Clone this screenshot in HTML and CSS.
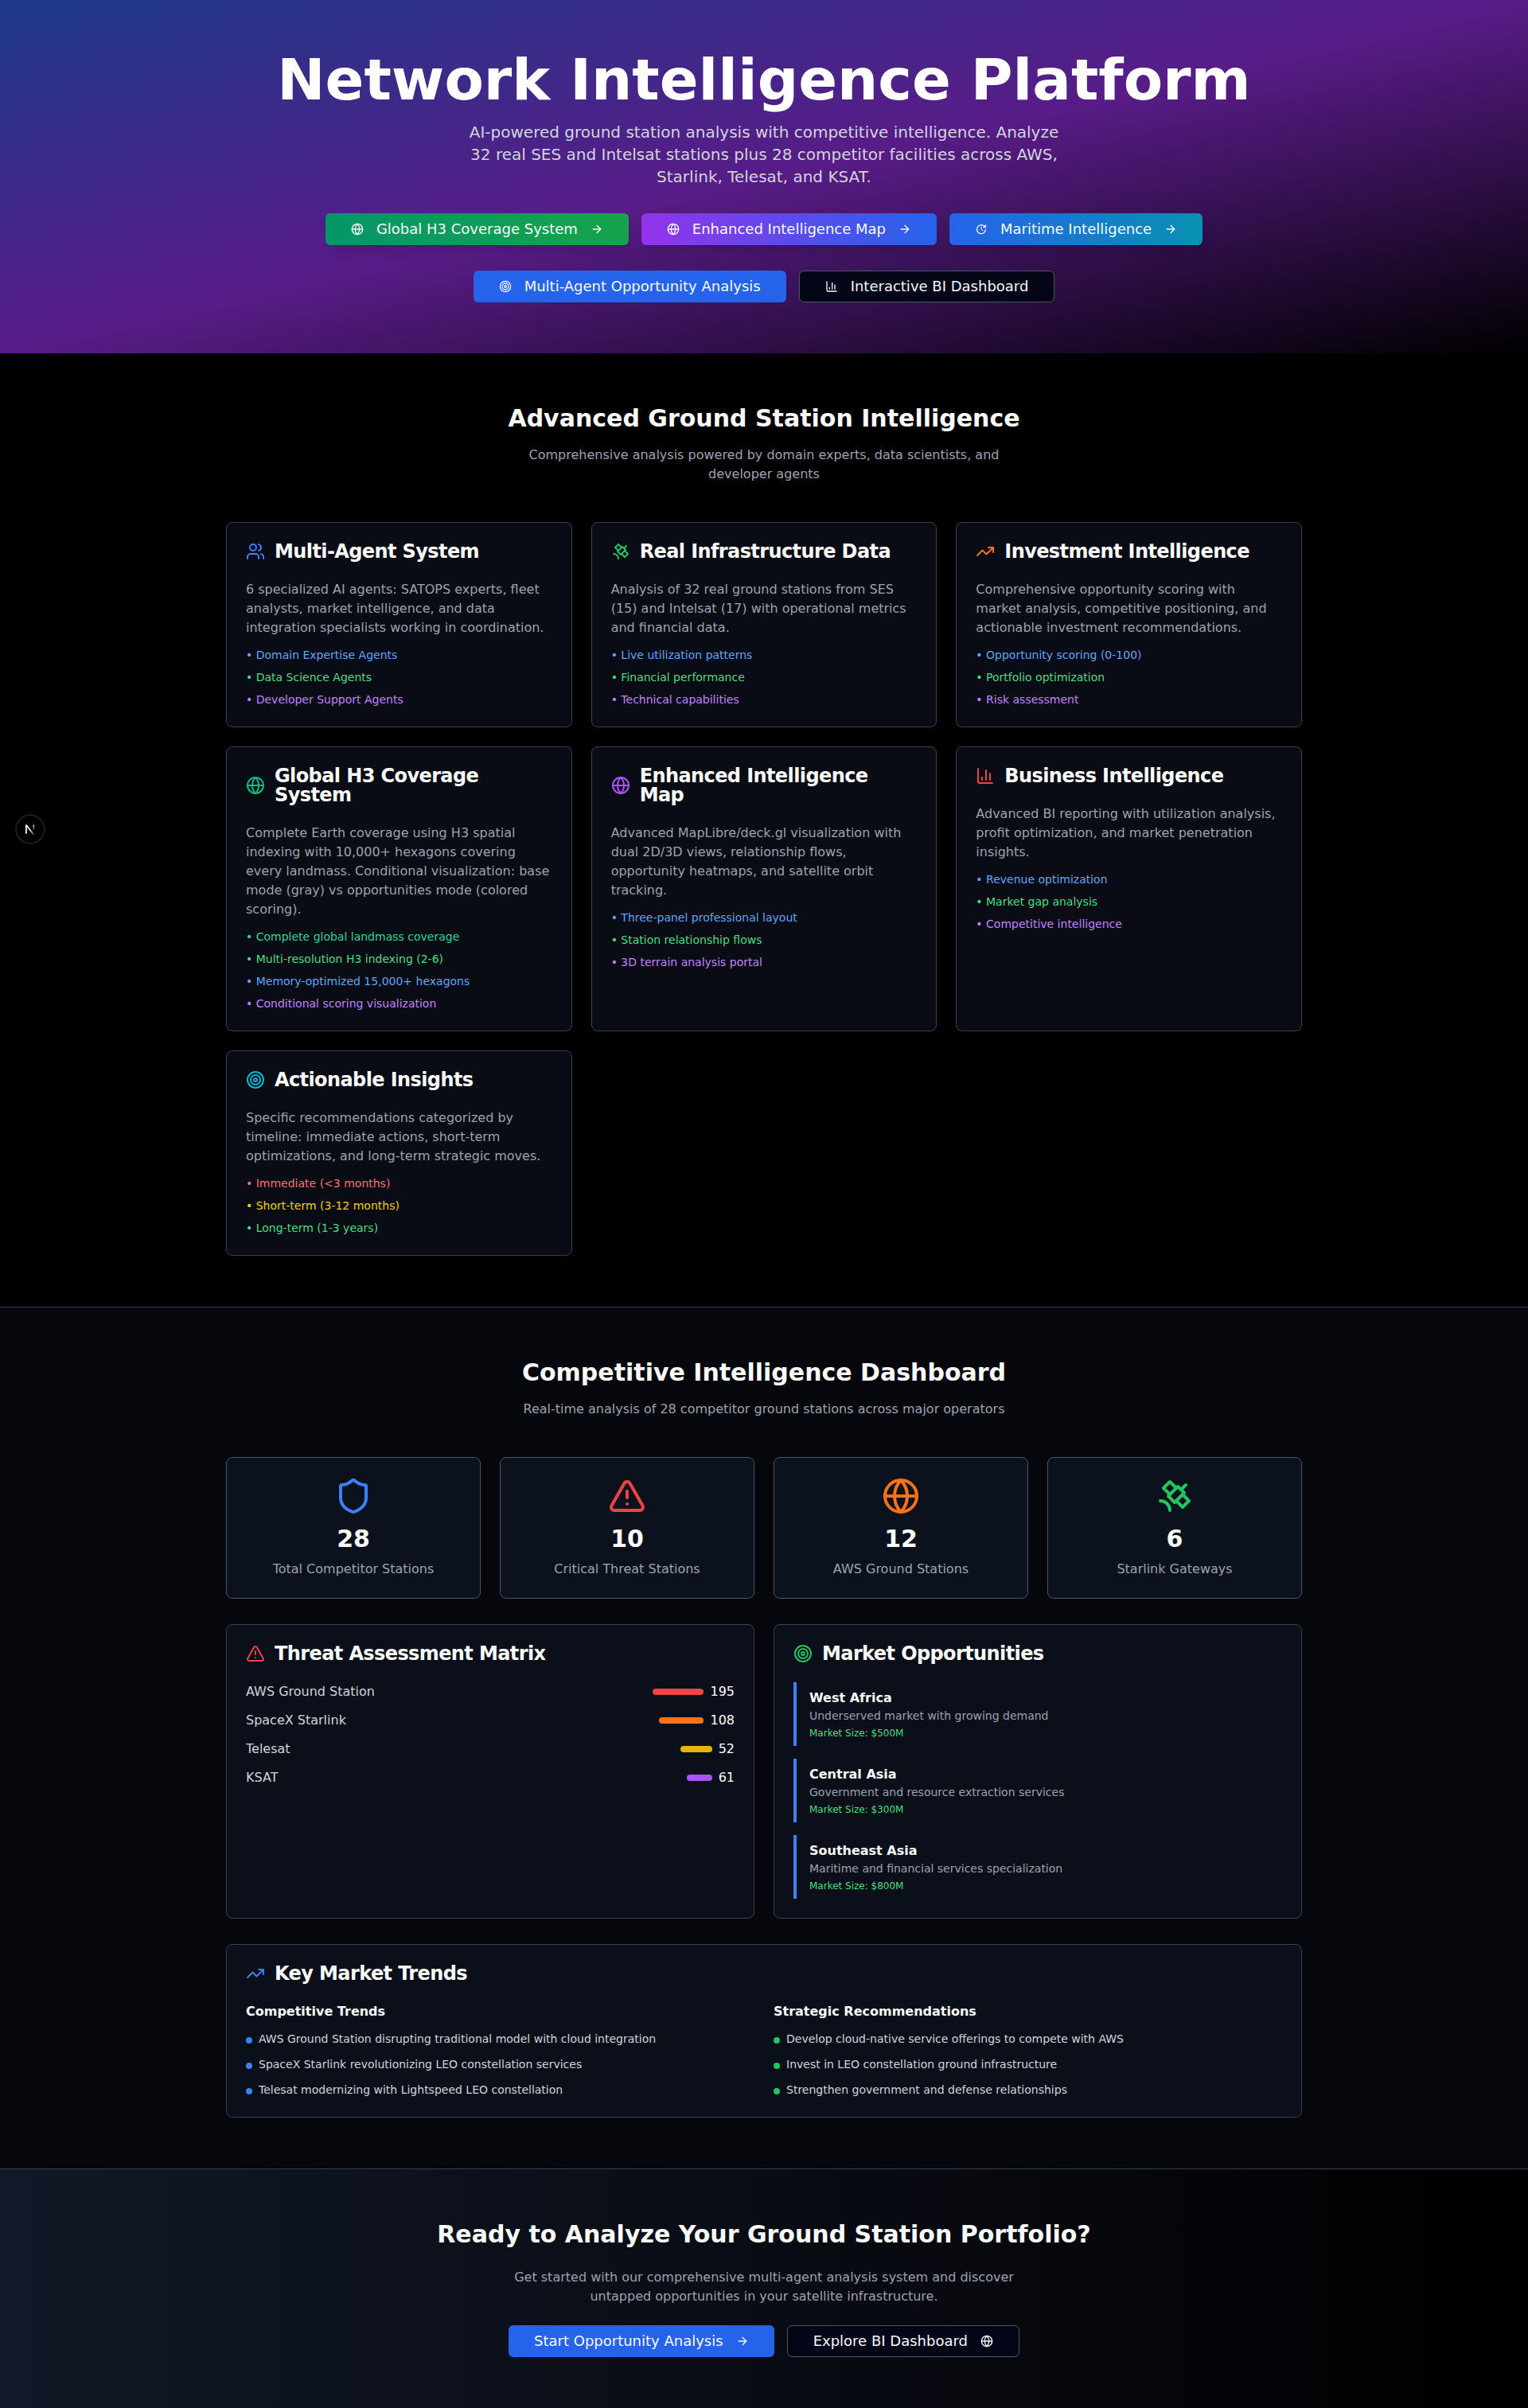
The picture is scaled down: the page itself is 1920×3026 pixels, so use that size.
FILE: index.html
```html
<!DOCTYPE html>
<html lang="en">
<head>
<meta charset="utf-8">
<title>Network Intelligence Platform</title>
<link rel="stylesheet" href="styles.css">
</head>
<body>
<svg class="sprite" aria-hidden="true">
  <symbol id="globe" viewBox="0 0 24 24"><circle cx="12" cy="12" r="10"/><path d="M12 2a14.5 14.5 0 0 0 0 20 14.5 14.5 0 0 0 0-20"/><path d="M2 12h20"/></symbol>
  <symbol id="arrow" viewBox="0 0 24 24"><path d="M5 12h14"/><path d="m12 5 7 7-7 7"/></symbol>
  <symbol id="update" viewBox="0 0 24 24"><path d="M17.500 6.200A8.200 8.200 0 1 0 20.200 13"/><path d="M20.500 4.200v4.600h-4.600z" fill="currentColor" stroke-width="1"/><path d="M12 8v4.500l3 1.800" stroke-width="1.500"/></symbol>
  <symbol id="target" viewBox="0 0 24 24"><circle cx="12" cy="12" r="10"/><circle cx="12" cy="12" r="6"/><circle cx="12" cy="12" r="2"/></symbol>
  <symbol id="chart" viewBox="0 0 24 24"><path d="M3 3v16a2 2 0 0 0 2 2h16"/><path d="M18 17V9"/><path d="M13 17V5"/><path d="M8 17v-3"/></symbol>
  <symbol id="users" viewBox="0 0 24 24"><path d="M16 21v-2a4 4 0 0 0-4-4H6a4 4 0 0 0-4 4v2"/><circle cx="9" cy="7" r="4"/><path d="M22 21v-2a4 4 0 0 0-3-3.870"/><path d="M16 3.130a4 4 0 0 1 0 7.750"/></symbol>
  <symbol id="satellite" viewBox="0 0 24 24"><path d="M13 7 9 3 5 7l4 4"/><path d="m17 11 4 4-4 4-4-4"/><path d="m8 12 4 4 6-6-4-4Z"/><path d="m16 8 3-3"/><path d="M9 21a6 6 0 0 0-6-6"/></symbol>
  <symbol id="trend" viewBox="0 0 24 24"><path d="m22 7-8.500 8.500-5-5L2 17"/><path d="M16 7h6v6"/></symbol>
  <symbol id="shield" viewBox="0 0 24 24"><path d="M20 13c0 5-3.500 7.500-7.660 8.950a1 1 0 0 1-.67-.01C7.500 20.500 4 18 4 13V6a1 1 0 0 1 1-1c2 0 4.500-1.200 6.240-2.720a1.170 1.170 0 0 1 1.520 0C14.510 3.810 17 5 19 5a1 1 0 0 1 1 1z"/></symbol>
  <symbol id="alert" viewBox="0 0 24 24"><path d="m21.730 18-8-14a2 2 0 0 0-3.480 0l-8 14A2 2 0 0 0 4 21h16a2 2 0 0 0 1.730-3"/><path d="M12 9v4"/><path d="M12 17h.01"/></symbol>
</svg>

<header class="hero">
  <h1>Network Intelligence Platform</h1>
  <p class="lead">AI-powered ground station analysis with competitive intelligence. Analyze 32 real SES and Intelsat stations plus 28 competitor facilities across AWS, Starlink, Telesat, and KSAT.</p>
  <div class="actions">
    <a class="btn btn-green"><svg class="icon"><use href="#globe"/></svg>Global H3 Coverage System<svg class="icon"><use href="#arrow"/></svg></a>
    <a class="btn btn-purple"><svg class="icon"><use href="#globe"/></svg>Enhanced Intelligence Map<svg class="icon"><use href="#arrow"/></svg></a>
    <a class="btn btn-cyan"><svg class="icon"><use href="#update"/></svg>Maritime Intelligence<svg class="icon"><use href="#arrow"/></svg></a>
  </div>
  <div class="actions">
    <a class="btn btn-blue"><svg class="icon"><use href="#target"/></svg>Multi-Agent Opportunity Analysis</a>
    <a class="btn btn-outline"><svg class="icon"><use href="#chart"/></svg>Interactive BI Dashboard</a>
  </div>
</header>

<section class="section">
  <div class="container">
    <div class="heading">
      <h2>Advanced Ground Station Intelligence</h2>
      <p>Comprehensive analysis powered by domain experts, data scientists, and developer agents</p>
    </div>
    <div class="grid features">
      <article class="card">
        <h3><svg class="icon blue"><use href="#users"/></svg>Multi-Agent System</h3>
        <p>6 specialized AI agents: SATOPS experts, fleet analysts, market intelligence, and data integration specialists working in coordination.</p>
        <ul class="points"><li class="blue-l">• Domain Expertise Agents</li><li class="green-l">• Data Science Agents</li><li class="purple-l">• Developer Support Agents</li></ul>
      </article>
      <article class="card">
        <h3><svg class="icon green"><use href="#satellite"/></svg>Real Infrastructure Data</h3>
        <p>Analysis of 32 real ground stations from SES (15) and Intelsat (17) with operational metrics and financial data.</p>
        <ul class="points"><li class="blue-l">• Live utilization patterns</li><li class="green-l">• Financial performance</li><li class="purple-l">• Technical capabilities</li></ul>
      </article>
      <article class="card">
        <h3><svg class="icon orange"><use href="#trend"/></svg>Investment Intelligence</h3>
        <p>Comprehensive opportunity scoring with market analysis, competitive positioning, and actionable investment recommendations.</p>
        <ul class="points"><li class="blue-l">• Opportunity scoring (0-100)</li><li class="green-l">• Portfolio optimization</li><li class="purple-l">• Risk assessment</li></ul>
      </article>
      <article class="card">
        <h3><svg class="icon emerald"><use href="#globe"/></svg>Global H3 Coverage System</h3>
        <p>Complete Earth coverage using H3 spatial indexing with 10,000+ hexagons covering every landmass. Conditional visualization: base mode (gray) vs opportunities mode (colored scoring).</p>
        <ul class="points"><li class="emerald-l">• Complete global landmass coverage</li><li class="green-l">• Multi-resolution H3 indexing (2-6)</li><li class="blue-l">• Memory-optimized 15,000+ hexagons</li><li class="purple-l">• Conditional scoring visualization</li></ul>
      </article>
      <article class="card">
        <h3><svg class="icon purple"><use href="#globe"/></svg>Enhanced Intelligence Map</h3>
        <p>Advanced MapLibre/deck.gl visualization with dual 2D/3D views, relationship flows, opportunity heatmaps, and satellite orbit tracking.</p>
        <ul class="points"><li class="blue-l">• Three-panel professional layout</li><li class="green-l">• Station relationship flows</li><li class="purple-l">• 3D terrain analysis portal</li></ul>
      </article>
      <article class="card">
        <h3><svg class="icon red"><use href="#chart"/></svg>Business Intelligence</h3>
        <p>Advanced BI reporting with utilization analysis, profit optimization, and market penetration insights.</p>
        <ul class="points"><li class="blue-l">• Revenue optimization</li><li class="green-l">• Market gap analysis</li><li class="purple-l">• Competitive intelligence</li></ul>
      </article>
      <article class="card">
        <h3><svg class="icon cyan"><use href="#target"/></svg>Actionable Insights</h3>
        <p>Specific recommendations categorized by timeline: immediate actions, short-term optimizations, and long-term strategic moves.</p>
        <ul class="points"><li class="red-l">• Immediate (&lt;3 months)</li><li class="yellow-l">• Short-term (3-12 months)</li><li class="green-l">• Long-term (1-3 years)</li></ul>
      </article>
    </div>
  </div>
</section>

<section class="section dashboard">
  <div class="container">
    <div class="heading">
      <h2>Competitive Intelligence Dashboard</h2>
      <p>Real-time analysis of 28 competitor ground stations across major operators</p>
    </div>
    <div class="grid stats">
      <div class="stat"><svg class="icon blue"><use href="#shield"/></svg><strong>28</strong><span>Total Competitor Stations</span></div>
      <div class="stat"><svg class="icon red"><use href="#alert"/></svg><strong>10</strong><span>Critical Threat Stations</span></div>
      <div class="stat"><svg class="icon orange"><use href="#globe"/></svg><strong>12</strong><span>AWS Ground Stations</span></div>
      <div class="stat"><svg class="icon green"><use href="#satellite"/></svg><strong>6</strong><span>Starlink Gateways</span></div>
    </div>
    <div class="grid panels">
      <article class="card">
        <h3><svg class="icon red"><use href="#alert"/></svg>Threat Assessment Matrix</h3>
        <ul class="threats">
          <li>AWS Ground Station<span class="score"><i class="bar bg-red" style="width:64px"></i>195</span></li>
          <li>SpaceX Starlink<span class="score"><i class="bar bg-orange" style="width:56px"></i>108</span></li>
          <li>Telesat<span class="score"><i class="bar bg-yellow" style="width:40px"></i>52</span></li>
          <li>KSAT<span class="score"><i class="bar bg-purple" style="width:32px"></i>61</span></li>
        </ul>
      </article>
      <article class="card">
        <h3><svg class="icon green"><use href="#target"/></svg>Market Opportunities</h3>
        <div class="markets">
          <div class="market"><h4>West Africa</h4><p>Underserved market with growing demand</p><small>Market Size: $500M</small></div>
          <div class="market"><h4>Central Asia</h4><p>Government and resource extraction services</p><small>Market Size: $300M</small></div>
          <div class="market"><h4>Southeast Asia</h4><p>Maritime and financial services specialization</p><small>Market Size: $800M</small></div>
        </div>
      </article>
    </div>
    <article class="card">
      <h3><svg class="icon blue"><use href="#trend"/></svg>Key Market Trends</h3>
      <div class="grid trends">
        <div>
          <h4>Competitive Trends</h4>
          <ul class="dots dots-blue"><li>AWS Ground Station disrupting traditional model with cloud integration</li><li>SpaceX Starlink revolutionizing LEO constellation services</li><li>Telesat modernizing with Lightspeed LEO constellation</li></ul>
        </div>
        <div>
          <h4>Strategic Recommendations</h4>
          <ul class="dots dots-green"><li>Develop cloud-native service offerings to compete with AWS</li><li>Invest in LEO constellation ground infrastructure</li><li>Strengthen government and defense relationships</li></ul>
        </div>
      </div>
    </article>
  </div>
</section>

<section class="section cta">
  <h2>Ready to Analyze Your Ground Station Portfolio?</h2>
  <p>Get started with our comprehensive multi-agent analysis system and discover untapped opportunities in your satellite infrastructure.</p>
  <div class="actions">
    <a class="btn btn-blue">Start Opportunity Analysis<svg class="icon"><use href="#arrow"/></svg></a>
    <a class="btn btn-outline">Explore BI Dashboard<svg class="icon"><use href="#globe"/></svg></a>
  </div>
</section>

<div class="dev-badge">
  <svg viewBox="0 0 36 36">
    <defs>
      <linearGradient id="fade-diagonal" gradientUnits="userSpaceOnUse" x1="18" y1="18" x2="23" y2="25"><stop stop-color="#fff"/><stop offset="1" stop-color="#fff" stop-opacity=".2"/></linearGradient>
      <linearGradient id="fade-side" gradientUnits="userSpaceOnUse" x1="22" y1="12" x2="22" y2="20"><stop stop-color="#fff"/><stop offset="1" stop-color="#fff" stop-opacity="0"/></linearGradient>
    </defs>
    <path d="M12.900 23.800V12.500" stroke="#fff"/>
    <path d="M13.200 13 22.300 25" stroke="url(#fade-diagonal)"/>
    <path d="M22.300 12.500v8" stroke="url(#fade-side)"/>
  </svg>
</div>
</body>
</html>
```
FILE: styles.css
```css
* { box-sizing: border-box; margin: 0; padding: 0; }
body { position: relative; background: #000; color: #fff; font: 16px/24px "DejaVu Sans", sans-serif; }
ul { list-style: none; }
.sprite { position: absolute; width: 0; height: 0; }
.icon { flex: none; width: 24px; height: 24px; fill: none; stroke: currentColor; stroke-width: 2; stroke-linecap: round; stroke-linejoin: round; }

.blue { color: #3b82f6; }
.green { color: #22c55e; }
.emerald { color: #10b981; }
.orange { color: #f97316; }
.purple { color: #a855f7; }
.red { color: #ef4444; }
.cyan { color: #06b6d4; }
.blue-l { color: #60a5fa; }
.green-l { color: #4ade80; }
.emerald-l { color: #34d399; }
.purple-l { color: #c084fc; }
.red-l { color: #f87171; }
.yellow-l { color: #facc15; }
.bg-red { background: #ef4444; }
.bg-orange { background: #f97316; }
.bg-yellow { background: #eab308; }
.bg-purple { background: #a855f7; }

.hero { display: flex; flex-direction: column; align-items: center; padding: 64px 24px; text-align: center; background: linear-gradient(to bottom right, #1e3a8a, #581c87, #000); }
.hero h1 { font-size: 72px; line-height: 72px; font-weight: 700; }
.lead { max-width: 768px; margin-top: 16px; color: #d1d5db; font-size: 20px; line-height: 28px; }
.actions { display: flex; justify-content: center; gap: 16px; margin-top: 32px; }
.btn { display: flex; align-items: center; gap: 16px; height: 40px; padding: 0 32px; border-radius: 6px; color: #f8fafc; font-size: 18px; line-height: 28px; white-space: nowrap; }
.btn .icon { width: 16px; height: 16px; }
.btn-green, .btn-purple, .btn-cyan { box-shadow: 0 10px 15px -3px rgba(0, 0, 0, .1), 0 4px 6px -4px rgba(0, 0, 0, .1); }
.btn-green { background: linear-gradient(to right, #059669, #16a34a); }
.btn-purple { background: linear-gradient(to right, #9333ea, #2563eb); }
.btn-cyan { background: linear-gradient(to right, #2563eb, #0891b2); }
.btn-blue { background: #2563eb; }
.btn-outline { border: 1px solid #4b5563; background: #020617; }

.section { padding: 64px 24px; }
.container { max-width: 1352px; margin: 0 auto; }
h2 { font-size: 30px; line-height: 36px; font-weight: 700; text-align: center; }
.heading { margin-bottom: 48px; }
.heading p { max-width: 672px; margin: 16px auto 0; color: #9ca3af; text-align: center; }
.grid { display: grid; gap: 24px; }
.features { grid-template-columns: repeat(3, 1fr); }
.card { padding: 24px; border: 1px solid #374151; border-radius: 8px; background: rgba(17, 24, 39, .5); }
.card h3 { display: flex; align-items: center; gap: 12px; margin-bottom: 24px; font-size: 24px; line-height: 24px; font-weight: 600; letter-spacing: -.6px; }
.card > p { color: #9ca3af; }
.points { display: grid; gap: 8px; margin-top: 12px; font-size: 14px; line-height: 20px; }

.dashboard { border-top: 1px solid #374151; border-bottom: 1px solid #374151; background: rgba(17, 24, 39, .3); }
.stats { grid-template-columns: repeat(4, 1fr); }
.stat { display: flex; flex-direction: column; align-items: center; padding: 24px; border: 1px solid #4b5563; border-radius: 8px; background: #0c121d; }
.stat .icon { width: 48px; height: 48px; margin-bottom: 12px; }
.stat strong { margin-bottom: 8px; font-size: 30px; line-height: 36px; }
.stat span { color: #9ca3af; }
.panels { grid-template-columns: repeat(2, 1fr); margin: 32px 0; }
.threats { display: grid; gap: 12px; color: #d1d5db; }
.threats li { display: flex; justify-content: space-between; }
.score { display: flex; align-items: center; gap: 8px; color: #fff; }
.bar { height: 8px; border-radius: 4px; }
.markets { display: grid; gap: 16px; }
.market { padding: 8px 0 8px 16px; border-left: 4px solid #3b82f6; }
h4 { font-size: 16px; line-height: 24px; font-weight: 600; }
.market p { color: #9ca3af; font-size: 14px; line-height: 20px; }
.market small { display: block; margin-top: 4px; color: #4ade80; font-size: 12px; line-height: 16px; }
.trends { grid-template-columns: repeat(2, 1fr); }
.dots { display: grid; gap: 12px; margin-top: 12px; color: #d1d5db; font-size: 14px; line-height: 20px; }
.dots li { display: flex; gap: 8px; }
.dots li::before { content: ""; flex: none; width: 8px; height: 8px; margin-top: 8px; border-radius: 50%; }
.dots-blue li::before { background: #3b82f6; }
.dots-green li::before { background: #22c55e; }

.cta { background: linear-gradient(to right, #111827, #000); }
.cta p { max-width: 672px; margin: 24px auto 0; color: #9ca3af; text-align: center; }
.cta .actions { margin-top: 24px; }

.dev-badge { position: absolute; left: 20px; top: 1024px; width: 36px; height: 36px; border-radius: 50%; background: #000; box-shadow: 0 0 0 1px #171717, inset 0 0 0 1px #262626; }
.dev-badge svg { display: block; fill: none; stroke-width: 1.700; }
```
